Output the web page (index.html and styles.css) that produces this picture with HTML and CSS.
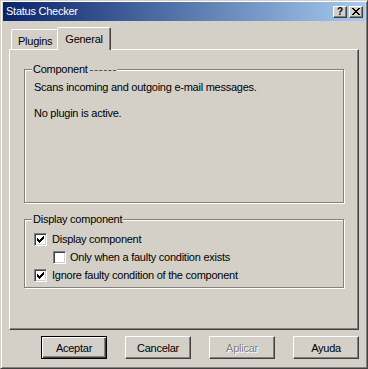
FILE: index.html
```html
<!DOCTYPE html>
<html>
    <head>
        <title>Status Checker</title>
        <link rel="stylesheet" href="styles.css">
    </head>
    <body>
        <div class="window">
            <!--TITLE BAR-->
            <div class="titlebar">
                <span class="title">Status Checker</span>
                <div class="title-buttons">
                    <span class="tbtn">?</span>
                    <span class="tbtn">
                        <svg width="8" height="7" viewBox="0 0 8 7" shape-rendering="crispEdges">
                            <path d="M0 0h2v1h1v1h2v-1h1v-1h2v1h-1v1h-1v1h-1v1h1v1h1v1h1v1h-2v-1h-1v-1h-2v1h-1v1h-2v-1h1v-1h1v-1h1v-1h-1v-1h-1v-1h-1z" fill="#000"/>
                        </svg>
                    </span>
                </div>
            </div>

            <div class="content">
                <!--TABS-->
                <div class="tabs">
                    <div class="tab">Plugins</div>
                    <div class="tab active">General</div>
                </div>

                <div class="panel">
                    <!--COMPONENT-->
                    <fieldset class="group group-component">
                        <legend>Component<span class="artifact"></span></legend>
                        <p class="line">Scans incoming and outgoing e-mail messages.</p>
                        <p class="line second">No plugin is active.</p>
                    </fieldset>

                    <!--DISPLAY COMPONENT-->
                    <fieldset class="group group-display">
                        <legend>Display component</legend>
                        <div class="check-row">
                            <span class="cb checked">
                                <svg width="7" height="7" viewBox="0 0 7 7" shape-rendering="crispEdges"><polygon points="0,2 1,2 1,3 2,3 2,4 3,4 3,3 4,3 4,2 5,2 5,1 6,1 6,0 7,0 7,3 6,3 6,4 5,4 5,5 4,5 4,6 3,6 3,7 2,7 2,6 1,6 1,5 0,5" fill="#000"/></svg>
                            </span>
                            <span>Display component</span>
                        </div>
                        <div class="check-row indent">
                            <span class="cb"></span>
                            <span>Only when a faulty condition exists</span>
                        </div>
                        <div class="check-row">
                            <span class="cb checked">
                                <svg width="7" height="7" viewBox="0 0 7 7" shape-rendering="crispEdges"><polygon points="0,2 1,2 1,3 2,3 2,4 3,4 3,3 4,3 4,2 5,2 5,1 6,1 6,0 7,0 7,3 6,3 6,4 5,4 5,5 4,5 4,6 3,6 3,7 2,7 2,6 1,6 1,5 0,5" fill="#000"/></svg>
                            </span>
                            <span>Ignore faulty condition of the component</span>
                        </div>
                    </fieldset>
                </div>

                <!--BUTTONS-->
                <div class="buttons">
                    <button class="btn default">Aceptar</button>
                    <button class="btn">Cancelar</button>
                    <button class="btn" disabled>Aplicar</button>
                    <button class="btn">Ayuda</button>
                </div>
            </div>
        </div>
    </body>
</html>
```

FILE: styles.css
```css
body{
    margin: 0;
    background-color: #d4d0c8;
    font-family: "Liberation Sans", Arial, sans-serif;
    font-size: 11px;
    letter-spacing: -0.25px;
    color: #000;
}

.window{
    width: 368px;
    height: 369px;
    box-sizing: border-box;
    border: 1px solid;
    border-color: #d4d0c8 #404040 #404040 #d4d0c8;
    box-shadow: inset 1px 1px #fff, inset -1px -1px #808080;
    padding: 1px 2px 2px 2px;
}

.titlebar{
    height: 19px;
    display: flex;
    align-items: center;
    padding-left: 3px;
    background: linear-gradient(to right, #0a246a, #a6caf0);
}

.title{
    flex: 1;
    color: #fff;
    line-height: 13px;
}

.title-buttons{
    display: flex;
    gap: 2px;
    margin-right: 2px;
}

.tbtn{
    width: 14px;
    height: 12px;
    box-sizing: border-box;
    display: flex;
    align-items: center;
    justify-content: center;
    background-color: #d4d0c8;
    border: 1px solid;
    border-color: #fff #404040 #404040 #fff;
    box-shadow: inset -1px -1px #808080;
    font-weight: bold;
    font-size: 10px;
    line-height: 10px;
    letter-spacing: 0;
}

.content{
    padding: 0 6px;
}

.tabs{
    display: flex;
    align-items: flex-end;
    height: 28px;
    padding-left: 2px;
}

.tab{
    height: 20px;
    box-sizing: border-box;
    padding: 5px 6px 0 6px;
    line-height: 13px;
    border: 1px solid;
    border-bottom: none;
    border-color: #fff #404040 transparent #fff;
    box-shadow: inset -1px 0 #808080;
    border-radius: 2px 2px 0 0;
}

.tab.active{
    height: 23px;
    margin-left: -2px;
    margin-bottom: -1px;
    padding: 5px 7px 0 7px;
    position: relative;
    z-index: 1;
    background-color: #d4d0c8;
}

.panel{
    height: 281px;
    box-sizing: border-box;
    border: 1px solid;
    border-color: #fff #404040 #404040 #fff;
    box-shadow: inset -1px -1px #808080;
    padding: 13px 14px 0 14px;
}

.group{
    margin: 0;
    padding: 5px 9px 0 9px;
    border: 1px solid #808080;
    box-shadow: inset 1px 1px #fff, 1px 1px #fff;
    box-sizing: border-box;
    min-width: 0;
}

.group legend{
    padding: 0 1px;
    margin-left: -2px;
    line-height: 13px;
    background-color: #d4d0c8;
}

.artifact{
    display: inline-block;
    width: 26px;
    margin-left: 2px;
    vertical-align: middle;
    border-top: 1px dashed #555;
}

.group-component{
    height: 140px;
}

.line{
    margin: 0;
    line-height: 13px;
}

.line.second{
    margin-top: 13px;
}

.group-display{
    height: 75px;
    margin-top: 10px;
    padding-top: 4px;
}

.check-row{
    display: flex;
    align-items: center;
    gap: 5px;
    height: 18px;
}

.check-row.indent{
    margin-left: 19px;
    gap: 4px;
}

.cb{
    width: 13px;
    height: 13px;
    box-sizing: border-box;
    display: flex;
    align-items: center;
    justify-content: center;
    background-color: #fff;
    border: 1px solid;
    border-color: #808080 #fff #fff #808080;
    box-shadow: inset 1px 1px #404040, inset -1px -1px #d4d0c8;
}

.buttons{
    display: flex;
    gap: 18px;
    margin-top: 6px;
    padding-left: 32px;
}

.btn{
    width: 66px;
    height: 23px;
    padding: 0;
    box-sizing: border-box;
    background-color: #d4d0c8;
    font-family: "Liberation Sans", Arial, sans-serif;
    font-size: 11px;
    letter-spacing: -0.25px;
    color: #000;
    border: 1px solid;
    border-color: #fff #404040 #404040 #fff;
    box-shadow: inset -1px -1px #808080;
    border-radius: 0;
}

.btn.default{
    border-color: #000;
    box-shadow: inset 1px 1px #fff, inset -1px -1px #404040, inset -2px -2px #808080;
}

.btn:disabled{
    color: #808080;
    text-shadow: 1px 1px #fff;
}
```
